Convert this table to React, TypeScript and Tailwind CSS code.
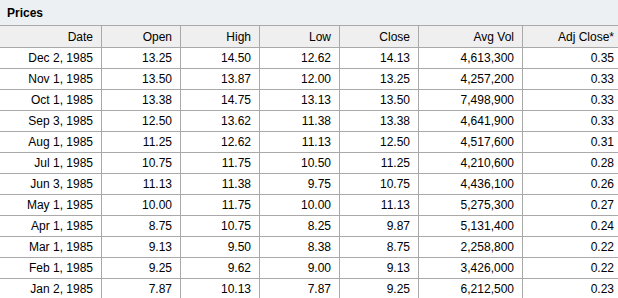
import React from "react";

type Row = [string, string, string, string, string, string, string];

const headers = ["Date", "Open", "High", "Low", "Close", "Avg Vol", "Adj Close*"];

const rows: Row[] = [
  ["Dec 2, 1985", "13.25", "14.50", "12.62", "14.13", "4,613,300", "0.35"],
  ["Nov 1, 1985", "13.50", "13.87", "12.00", "13.25", "4,257,200", "0.33"],
  ["Oct 1, 1985", "13.38", "14.75", "13.13", "13.50", "7,498,900", "0.33"],
  ["Sep 3, 1985", "12.50", "13.62", "11.38", "13.38", "4,641,900", "0.33"],
  ["Aug 1, 1985", "11.25", "12.62", "11.13", "12.50", "4,517,600", "0.31"],
  ["Jul 1, 1985", "10.75", "11.75", "10.50", "11.25", "4,210,600", "0.28"],
  ["Jun 3, 1985", "11.13", "11.38", "9.75", "10.75", "4,436,100", "0.26"],
  ["May 1, 1985", "10.00", "11.75", "10.00", "11.13", "5,275,300", "0.27"],
  ["Apr 1, 1985", "8.75", "10.75", "8.25", "9.87", "5,131,400", "0.24"],
  ["Mar 1, 1985", "9.13", "9.50", "8.38", "8.75", "2,258,800", "0.22"],
  ["Feb 1, 1985", "9.25", "9.62", "9.00", "9.13", "3,426,000", "0.22"],
  ["Jan 2, 1985", "7.87", "10.13", "7.87", "9.25", "6,212,500", "0.23"],
];

const widths = ["w-[102px]", "w-[79px]", "w-[79px]", "w-[80px]", "w-[79px]", "w-[104px]", "w-[100px]"];

const Cells = ({ values }: { values: string[] }) => (
  <>
    {values.map((v, i) => (
      <div
        key={i}
        className={`${widths[i]} shrink-0 border-r border-[#a9a9a9] pr-[8px] flex items-center justify-end`}
      >
        {v}
      </div>
    ))}
  </>
);

export default function App() {
  return (
    <div
      className="w-[618px] h-[298px] overflow-hidden bg-white text-black text-[12px]"
      style={{ fontFamily: '"Liberation Sans", Arial, sans-serif' }}
    >
      <div className="h-[26px] bg-[#edf0f3] border-b border-[#a9a9a9] flex items-center pl-[7px] font-bold">
        Prices
      </div>
      <div className="h-[22px] bg-[#efefef] border-b border-[#a9a9a9] flex w-[623px]">
        <Cells values={headers} />
      </div>
      {rows.map((r) => (
        <div key={r[0]} className="h-[21px] border-b border-[#a9a9a9] flex w-[623px]">
          <Cells values={r} />
        </div>
      ))}
    </div>
  );
}
